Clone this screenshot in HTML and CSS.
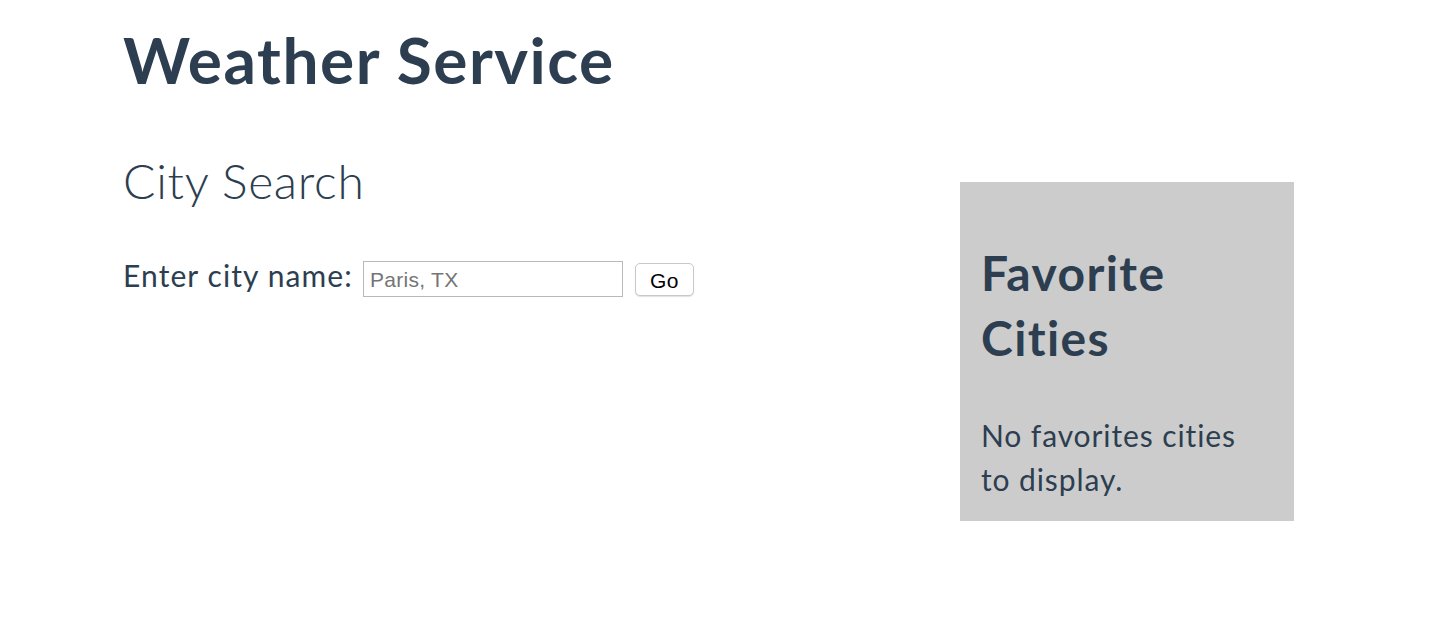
FILE: index.html
```html
<!DOCTYPE html>
<html>
<head>
<meta charset="utf-8">
<title>Weather Service</title>
<link rel="stylesheet" href="styles.css">
</head>
<body>
<div class="app">
  <h1 class="title">Weather Service</h1>
  <div class="layout">
    <main class="search">
      <h2 class="search-title">City Search</h2>
      <form class="search-form">
        <label class="search-label" for="city">Enter city name:</label>
        <input class="search-input" id="city" type="text" placeholder="Paris, TX">
        <button class="search-btn" type="button">Go</button>
      </form>
    </main>
    <aside class="favorites">
      <h2 class="fav-title">Favorite Cities</h2>
      <p class="fav-empty">No favorites cities to display.</p>
    </aside>
  </div>
</div>
</body>
</html>
```
FILE: styles.css
```css
html, body {
  margin: 0;
  padding: 0;
  background: #ffffff;
}
body {
  font-family: Lato, "Noto Sans", sans-serif;
  color: #2c3e50;
  font-variant-ligatures: none;
}
.app {
  padding-left: 123px;
}
.title {
  margin: 22px 0 0 0;
  font-size: 64px;
  line-height: 1.2;
  font-weight: 700;
  letter-spacing: 1.5px;
}
.layout {
  display: flex;
  align-items: flex-start;
}
.search {
  width: 837px;
}
.search-title {
  margin: 53px 0 0 0;
  font-size: 48px;
  line-height: 1.2;
  font-weight: 300;
  letter-spacing: 0.7px;
}
.search-form {
  margin-top: 52px;
  display: flex;
  align-items: flex-start;
}
.search-label {
  font-size: 30px;
  line-height: 36px;
  margin-top: -4px;
  margin-right: 10px;
  letter-spacing: 1.1px;
}
.search-input {
  box-sizing: border-box;
  width: 260px;
  height: 36px;
  margin: 0;
  padding: 2px 6px 0 6px;
  border: 1px solid #b9b9b9;
  border-radius: 0;
  font-family: "Liberation Sans", Arial, sans-serif;
  font-size: 21px;
  color: #333;
  outline: none;
  letter-spacing: 0.3px;
}
.search-input::placeholder {
  color: #757575;
}
.search-btn {
  box-sizing: border-box;
  margin: 2px 0 0 12px;
  width: 59px;
  height: 33px;
  padding: 2px 0 0 0;
  background: #ffffff;
  border: 1px solid #c8c8c8;
  border-radius: 5px;
  box-shadow: 0 1px 1px rgba(0,0,0,0.12);
  font-family: "Liberation Sans", Arial, sans-serif;
  font-size: 21px;
  color: #000;
  letter-spacing: 0.5px;
}
.favorites {
  margin-top: 83px;
  box-sizing: border-box;
  width: 334px;
  height: 339px;
  padding: 58px 30px 0 21px;
  background: #cccccc;
}
.fav-title {
  margin: 0;
  font-size: 48px;
  line-height: 65px;
  font-weight: 700;
  letter-spacing: 1.4px;
}
.fav-empty {
  margin: 43px 0 0 0;
  font-size: 30px;
  line-height: 44px;
  font-weight: 400;
  letter-spacing: 0.9px;
}
```
